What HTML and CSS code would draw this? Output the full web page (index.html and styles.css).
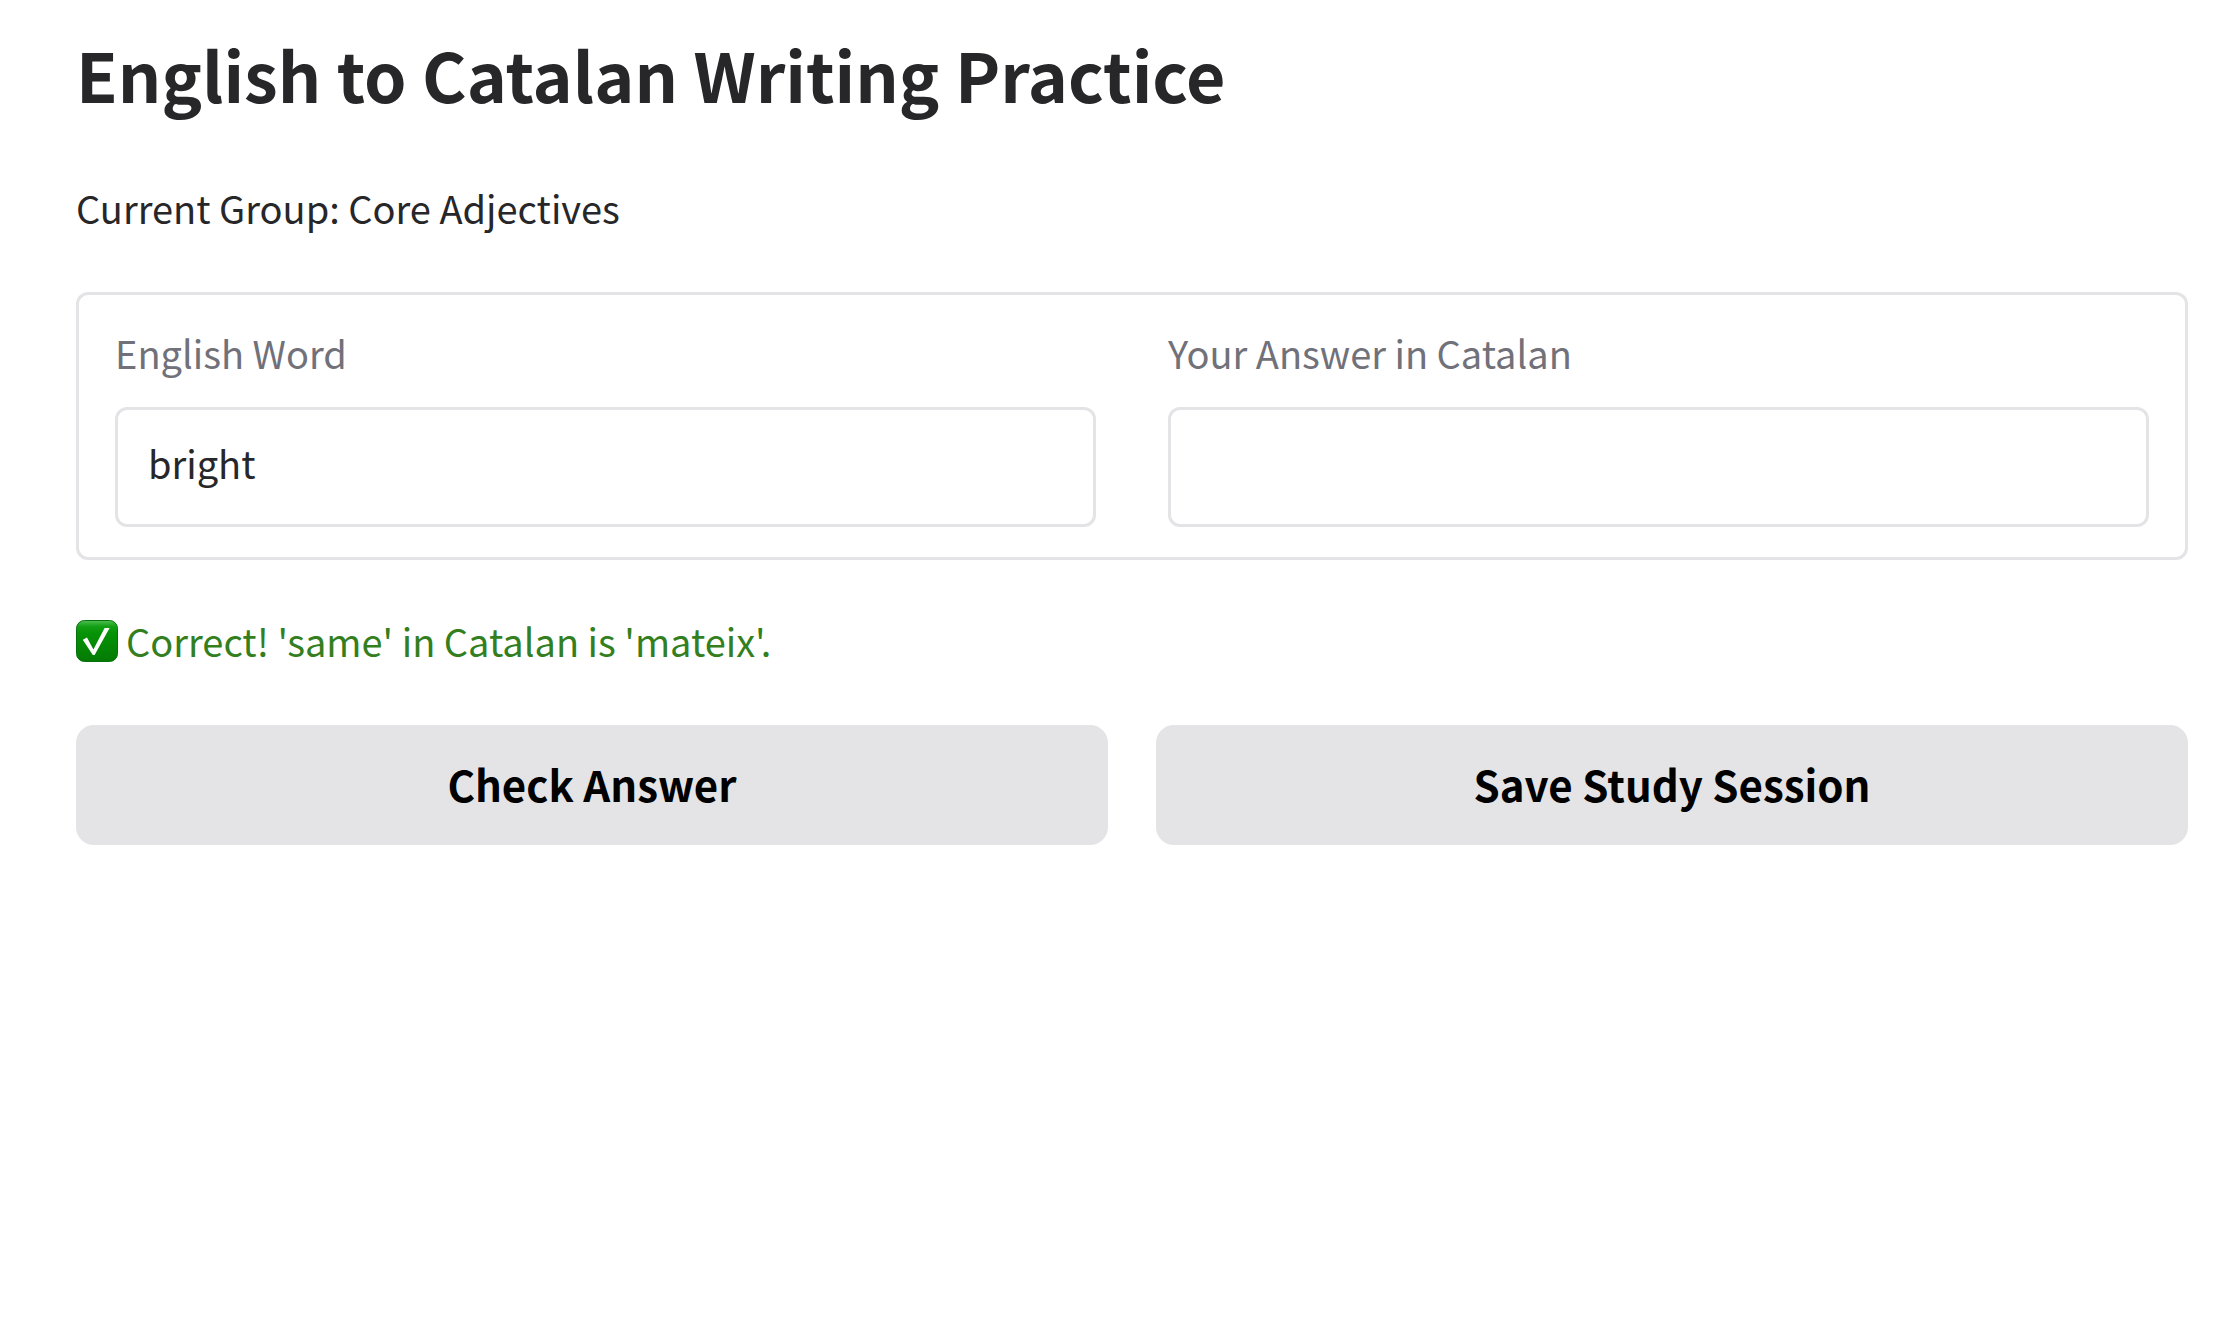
FILE: index.html
```html
<!DOCTYPE html>
<html lang="en">
<head>
<meta charset="utf-8">
<title>English to Catalan Writing Practice</title>
<link rel="stylesheet" href="styles.css">
</head>
<body>
<main class="page">
  <h1 class="title">English to Catalan Writing Practice</h1>
  <p class="group">Current Group: Core Adjectives</p>
  <form class="practice">
    <div class="fields">
      <div class="field">
        <label class="label" for="word">English Word</label>
        <input class="input" id="word" type="text" value="bright" readonly>
      </div>
      <div class="field">
        <label class="label" for="answer">Your Answer in Catalan</label>
        <input class="input" id="answer" type="text">
      </div>
    </div>
    <p class="feedback">
      <svg class="check" viewBox="0 0 42 42" aria-hidden="true">
        <defs>
          <linearGradient id="tile" x1="0" y1="0" x2="0" y2="1">
            <stop offset="0" stop-color="#4fbf52"/>
            <stop offset="0.14" stop-color="#14a016"/>
            <stop offset="0.3" stop-color="#069306"/>
            <stop offset="1" stop-color="#047a04"/>
          </linearGradient>
        </defs>
        <rect x="0.5" y="0.5" width="41" height="41" rx="8" fill="url(#tile)" stroke="#08700c"/>
        <path d="M6.8 19.8 11 17.6 17.4 29.6 28.6 8H33.6L18.6 35H16.8Z" fill="#fff"/>
      </svg>
      <span>Correct! 'same' in Catalan is 'mateix'.</span>
    </p>
    <div class="actions">
      <button class="button" type="button">Check Answer</button>
      <button class="button" type="button">Save Study Session</button>
    </div>
  </form>
</main>
</body>
</html>
```

FILE: styles.css
```css
* { box-sizing: border-box; }
body {
  margin: 0;
  background: #fff;
  color: #27272a;
  font-family: "Noto Sans CJK SC", sans-serif;
  font-size: 38px;
  line-height: 60px;
}
.page { padding: 32px 42px 48px 76px; }
.title { margin: 0 0 62px; font-size: 68px; line-height: 84px; font-weight: 600; }
.group { margin: 0 0 54px; }
.fields {
  display: grid;
  grid-template-columns: 1fr 1fr;
  gap: 72px;
  padding: 28px 36px 30px;
  border: 3px solid #e4e4e7;
  border-radius: 12px;
}
.field { display: flex; flex-direction: column; gap: 24px; }
.label { color: #71717a; }
.input {
  width: 100%;
  height: 120px;
  padding: 0 30px 10px;
  border: 3px solid #e4e4e7;
  border-radius: 12px;
  background: #fff;
  color: #27272a;
  font: inherit;
}
.feedback { display: flex; align-items: center; gap: 8px; margin: 51px 0 54px; color: #337f20; }
.check { width: 42px; height: 42px; }
.actions { display: grid; grid-template-columns: 1fr 1fr; gap: 48px; }
.button {
  height: 120px;
  padding: 0 24px 2px;
  border: 0;
  border-radius: 18px;
  background: #e4e4e7;
  color: #000;
  font: inherit;
  font-size: 42px;
  font-weight: 600;
}
```
